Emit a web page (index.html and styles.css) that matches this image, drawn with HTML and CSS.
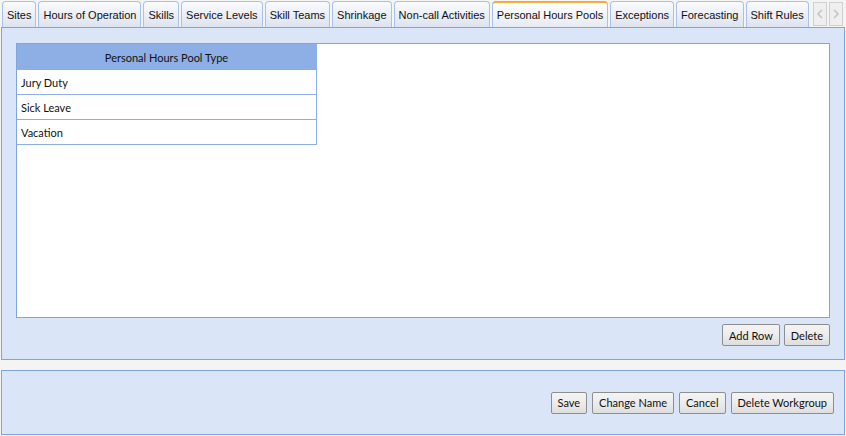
FILE: index.html
```html
<!DOCTYPE html>
<html>
<head>
<meta charset="utf-8">
<link rel="stylesheet" href="styles.css">
</head>
<body>
<div class="tabstrip">
  <div class="tabs">
    <div class="tab">Sites</div>
    <div class="tab">Hours of Operation</div>
    <div class="tab">Skills</div>
    <div class="tab">Service Levels</div>
    <div class="tab">Skill Teams</div>
    <div class="tab">Shrinkage</div>
    <div class="tab">Non-call Activities</div>
    <div class="tab active">Personal Hours Pools</div>
    <div class="tab">Exceptions</div>
    <div class="tab">Forecasting</div>
    <div class="tab">Shift Rules</div>
  </div>
  <div class="scrollers">
    <div class="scroll"><svg width="8" height="10" viewBox="0 0 8 10"><path d="M6 1 L2 5 L6 9" fill="none" stroke="#c4c4c4" stroke-width="1.6"/></svg></div>
    <div class="scroll"><svg width="8" height="10" viewBox="0 0 8 10"><path d="M2 1 L6 5 L2 9" fill="none" stroke="#c4c4c4" stroke-width="1.6"/></svg></div>
  </div>
</div>
<div class="panel main">
  <div class="grid">
    <table class="pool">
      <thead><tr><th>Personal Hours Pool Type</th></tr></thead>
      <tbody>
        <tr><td>Jury Duty</td></tr>
        <tr><td>Sick Leave</td></tr>
        <tr><td>Vacation</td></tr>
      </tbody>
    </table>
  </div>
  <div class="actions">
    <button class="btn">Add Row</button>
    <button class="btn">Delete</button>
  </div>
</div>
<div class="panel footer">
  <button class="btn">Save</button>
  <button class="btn">Change Name</button>
  <button class="btn">Cancel</button>
  <button class="btn">Delete Workgroup</button>
</div>
</body>
</html>
```
FILE: styles.css
```css
html, body {
  margin: 0;
  padding: 0;
  background: #f4f4f4;
  width: 846px;
  height: 436px;
  overflow: hidden;
}
body {
  font-family: "Lato", "Liberation Sans", sans-serif;
  color: #000;
}
.tabstrip {
  display: flex;
  height: 27px;
  padding-left: 2px;
  box-sizing: border-box;
}
.tabs {
  display: flex;
  gap: 2px;
  align-items: flex-end;
}
.tab {
  height: 26px;
  box-sizing: border-box;
  border: 1px solid #a7c1e8;
  border-bottom: none;
  border-radius: 4px 4px 0 0;
  background: linear-gradient(#fafbfd 0%, #eef1f8 40%, #dde3ef 100%);
  font-family: "Liberation Sans", Arial, sans-serif;
  font-size: 11px;
  padding: 0 4px;
  line-height: 26px;
  white-space: nowrap;
  color: #111;
}
.tab.active {
  border-top: 2px solid #f7a93a;
  background: linear-gradient(#ffffff 0%, #f3f5fa 50%, #e6eaf3 100%);
  line-height: 25px;
}
.scrollers {
  display: flex;
  gap: 2px;
  margin-left: 4px;
  padding-top: 2px;
}
.scroll {
  width: 14px;
  height: 24px;
  box-sizing: border-box;
  border: 1px solid #d0d0d0;
  background: #efefef;
  display: flex;
  align-items: center;
  justify-content: center;
}
.panel {
  margin: 0 1px;
  border: 1px solid #7fa6dc;
  background: #dae5f8;
  box-sizing: border-box;
}
.main {
  height: 333px;
  padding: 15px 14px 0 14px;
}
.grid {
  height: 275px;
  box-sizing: border-box;
  border: 1px solid #7fa6dc;
  background: #fff;
}
.pool {
  border-collapse: collapse;
  width: 300px;
  font-family: "Lato", "Liberation Sans", sans-serif;
  font-size: 11px;
}
.pool th {
  background: #8dafe6;
  font-weight: normal;
  height: 26px;
  padding: 0;
  text-align: center;
  border-right: 1px solid #8dafe6;
  color: #111;
}
.pool td {
  height: 24px;
  padding: 0 0 0 4px;
  border-right: 1px solid #8dafe6;
  border-bottom: 1px solid #8dafe6;
  color: #111;
}
.actions {
  display: flex;
  justify-content: flex-end;
  gap: 4px;
  margin-top: 6px;
}
.btn {
  height: 22px;
  box-sizing: border-box;
  border: 1px solid #8e8e8e;
  border-radius: 2px;
  background: linear-gradient(#f4f4f4 0%, #ececec 50%, #dedede 100%);
  font-family: "Lato", "Liberation Sans", sans-serif;
  font-size: 11px;
  padding: 0 6px;
  margin: 0;
  color: #111;
}
.footer {
  margin-top: 10px;
  height: 65px;
  display: flex;
  justify-content: flex-end;
  align-items: center;
  gap: 5px;
  padding-right: 10px;
}
```
